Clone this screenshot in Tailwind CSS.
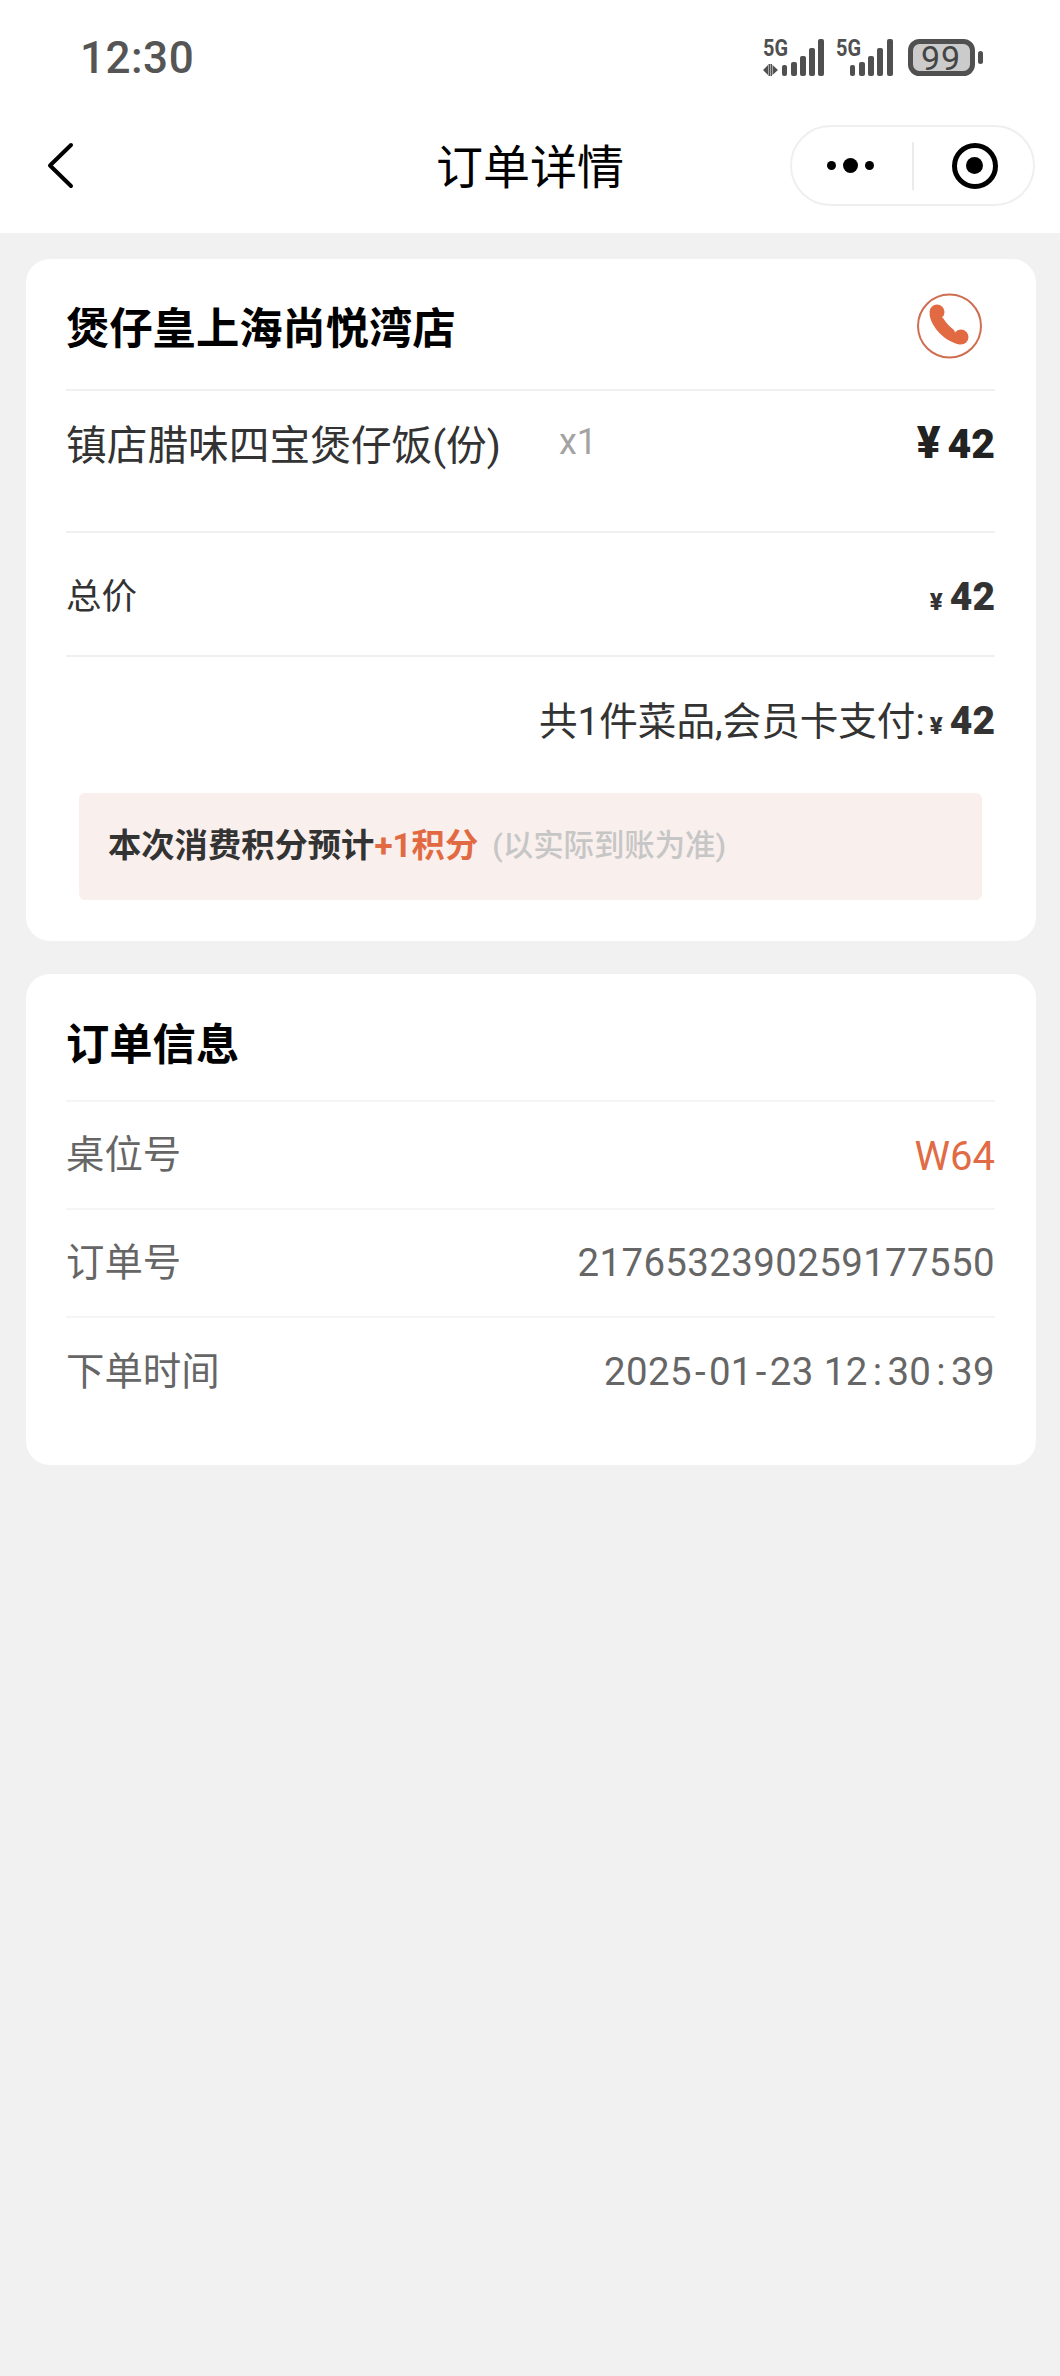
<!DOCTYPE html>
<html lang="zh-CN"><head><meta charset="utf-8"><script src="https://cdn.jsdelivr.net/npm/@tailwindcss/browser@4"></script></head>
<body class="m-0">
<div class="w-[1060px] h-[2376px] bg-[#f1f1f1] overflow-hidden font-['Roboto','Noto_Sans_CJK_SC',sans-serif]">
  <div class="h-[233px] bg-white">
    <div class="h-[115px] flex justify-between items-start pl-[80px] pr-[77px] pt-[30px]">
      <span class="text-[44px] leading-[56px] font-medium text-[#555] tracking-[0.500px]">12:30</span>
      <svg class="mt-[9px] overflow-visible" width="220" height="37" viewBox="763 39 220 37" fill="#505050">
        <text x="763" y="56" font-family="Roboto" font-weight="700" font-size="24" textLength="25" lengthAdjust="spacingAndGlyphs">5G</text>
        <path d="M763 70l5-5v10zM772.500 65l5.500 5-5.500 5z"/><rect x="768.500" y="64" width="1.500" height="12"/><rect x="770.500" y="64" width="1.500" height="12"/>
        <rect x="782" y="65" width="5" height="11" rx="2"/><rect x="791" y="62" width="6" height="14" rx="2"/><rect x="800" y="56" width="6" height="20" rx="2"/><rect x="809" y="48" width="6" height="28" rx="2"/><rect x="818" y="39" width="6" height="37" rx="2"/>
        <text x="836" y="56" font-family="Roboto" font-weight="700" font-size="24" textLength="25" lengthAdjust="spacingAndGlyphs">5G</text>
        <rect x="850" y="65" width="5" height="11" rx="2"/><rect x="859" y="62" width="6" height="14" rx="2"/><rect x="868" y="56" width="6" height="20" rx="2"/><rect x="877" y="48" width="6" height="28" rx="2"/><rect x="887" y="39" width="6" height="37" rx="2"/>
        <rect x="910.500" y="41.500" width="62" height="32" rx="9" fill="#cbcbcb" stroke="#505050" stroke-width="5"/>
        <text x="941" y="70" text-anchor="middle" font-family="Roboto" font-size="34" letter-spacing="1" fill="#444">99</text>
        <rect x="978" y="51" width="5" height="13" rx="2.500"/>
      </svg>
    </div>
    <div class="h-[118px] flex items-start justify-between pl-[44px] pr-[25px] relative">
      <svg class="mt-[25px]" width="32" height="50" viewBox="0 0 32 50" fill="none" stroke="#000" stroke-width="4" stroke-linecap="round" stroke-linejoin="round"><path d="M27 5L6 25.500L27 46"/></svg>
      <span class="absolute left-0 right-0 top-[22px] text-center text-[47px] leading-[62px] text-black pointer-events-none">订单详情</span>
      <div class="mt-[10px] w-[245px] h-[81px] rounded-[41px] border-2 border-[#efefef] flex items-center">
        <div class="w-[120px] pr-[3px] flex justify-center items-center gap-[7px]">
          <span class="w-[9px] h-[9px] rounded-full bg-black"></span><span class="w-[15px] h-[15px] rounded-full bg-black"></span><span class="w-[9px] h-[9px] rounded-full bg-black"></span>
        </div>
        <div class="w-[2px] h-[48px] bg-[#ebebeb]"></div>
        <div class="flex-1 flex justify-center pl-[2px]">
          <div class="w-[46px] h-[46px] rounded-full border-[5px] border-black flex items-center justify-center"><span class="w-[17px] h-[17px] rounded-full bg-black"></span></div>
        </div>
      </div>
    </div>
  </div>

  <div class="mt-[26px] ml-[26px] w-[1010px] bg-white rounded-[24px] h-[682px] pl-[40px] pr-[41px]">
    <div class="h-[132px] flex items-start justify-between border-b-2 border-[#f0f0f0]">
      <span class="mt-[42px] text-[43.300px] leading-[58px] font-bold text-black">煲仔皇上海尚悦湾店</span>
      <svg class="mt-[34px] mr-[13px]" width="65" height="66" viewBox="0 0 65 66" fill="none">
        <circle cx="32.500" cy="33" r="31.500" stroke="#cf6d50" stroke-width="2"/>
        <circle cx="20" cy="19" r="7.500" fill="#e26a43"/><circle cx="44" cy="44" r="7.500" fill="#e26a43"/>
        <path d="M12.500 21C14 34 28 49 43 51.500L37 37C33 34 29 30 26 25Z" fill="#e26a43"/>
      </svg>
    </div>
    <div class="h-[142px] flex items-start border-b-2 border-[#f0f0f0]">
      <span class="w-[493px] mt-[28px] text-[40.700px] leading-[54px] text-[#333]">镇店腊味四宝煲仔饭(份)</span>
      <span class="mt-[30px] text-[36px] leading-[42px] text-[#a3a3a3]">x1</span>
      <span class="ml-auto mt-[26px] text-[41px] leading-[52px] font-black text-[#222]"><span class="text-[44px] mr-[7px]">¥</span>42</span>
    </div>
    <div class="h-[124px] flex items-start justify-between border-b-2 border-[#f0f0f0]">
      <span class="mt-[39px] text-[35.500px] leading-[50px] text-[#333]">总价</span>
      <span class="mt-[39px] text-[39px] leading-[50px] font-black text-[#333]"><span class="text-[24px] mr-[7px]">¥</span>42</span>
    </div>
    <div class="mt-[40px] h-[50px] flex justify-end items-center text-[38.600px] leading-[50px] text-[#333]">
      <span>共1件菜品,会员卡支付:</span><span class="pt-[3px] text-[39px] font-black ml-[5px]"><span class="text-[24px] mr-[7px]">¥</span>42</span>
    </div>
    <div class="mt-[46px] ml-[13px] mr-[13px] h-[107px] rounded-[6px] bg-[#f9efec] pl-[29px] pb-[2px] flex items-center">
      <span class="text-[33.300px] leading-[46px] font-bold text-[#333]">本次消费积分预计</span><span class="text-[33.300px] leading-[46px] font-bold text-[#e26a43]">+1积分</span><span class="ml-[14px] text-[30.400px] leading-[46px] font-medium text-[#c6c6c6]">(以实际到账为准)</span>
    </div>
  </div>

  <div class="mt-[33px] ml-[26px] w-[1010px] bg-white rounded-[24px] h-[491px] pl-[40px] pr-[41px]">
    <div class="h-[128px] border-b-2 border-[#f5f5f5] pt-[43px]">
      <span class="block text-[43.300px] leading-[58px] font-bold text-black">订单信息</span>
    </div>
    <div class="h-[108px] flex items-center justify-between border-b-2 border-[#f5f5f5] text-[38.400px] text-[#666]">
      <span>桌位号</span><span class="pt-[3px] text-[40px] text-[#e06b45]">W64</span>
    </div>
    <div class="h-[108px] flex items-center justify-between border-b-2 border-[#f5f5f5] text-[38.400px] text-[#666]">
      <span>订单号</span><span class="tracking-[0.400px]">2176532390259177550</span>
    </div>
    <div class="h-[108px] flex items-center justify-between text-[38.400px] text-[#666]">
      <span>下单时间</span><span class="tracking-[0.400px]">2025<span class="mx-[3px]">-</span>01<span class="mx-[3px]">-</span>23 12<span class="mx-[5px]">:</span>30<span class="mx-[5px]">:</span>39</span>
    </div>
  </div>
</div>
</body></html>
